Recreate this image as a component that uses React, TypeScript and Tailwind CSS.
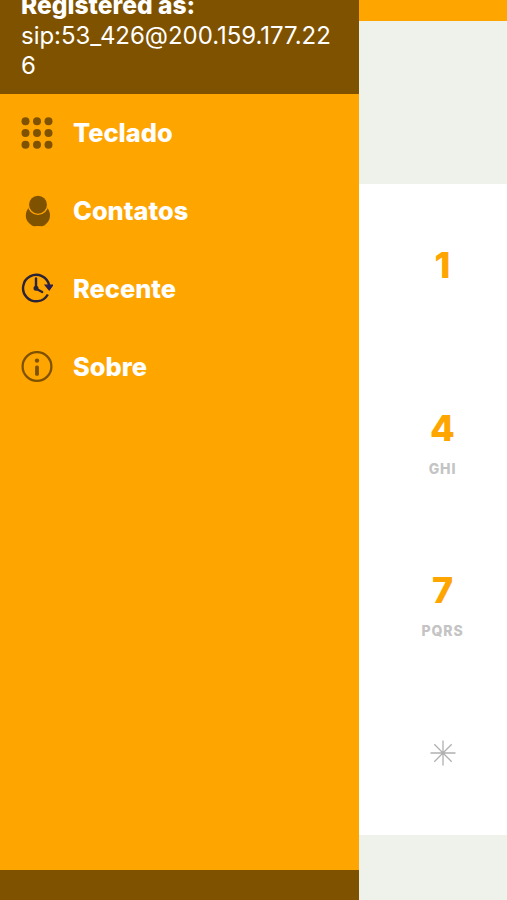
import { ReactNode } from "react"

const DialpadIcon = () => (
    <svg width="32" height="32" viewBox="0 0 32 32" fill="#7f5200">
        {[4.2, 16, 27.8].map((y) => [4.5, 16, 27.5].map((x) => (
            <circle key={`${x}-${y}`} cx={x} cy={y} r="4" />
        )))}
    </svg>
)

const ContactIcon = () => (
    <svg width="32" height="32" viewBox="0 0 32 32" fill="#7f5200">
        <path d="M9 11.5C3.6 16 3.4 24.5 8.5 28.6Q11 31.2 13 31.2q4-.5 8 0Q23.5 31.2 25.5 28.6C30.4 24.5 30.2 16 25 11.5z" />
        <circle cx="17" cy="9.7" r="9.6" stroke="#ffa500" strokeWidth="1.3" />
    </svg>
)

const RecentIcon = () => (
    <svg width="32" height="32" viewBox="0 0 32 32" fill="none" stroke="#2b2438" strokeWidth="2.4">
        <path d="M28.2 12.5A13.2 13.2 0 1 0 26.8 21.5" />
        <path d="M15 5.5v9.8" strokeLinecap="round" />
        <path d="M15.6 16l5.6 3" strokeLinecap="round" />
        <circle cx="15" cy="15.3" r="1.3" />
        <path d="M24.2 12.2h7.4L28.2 17z" fill="#2b1d50" stroke="#2b1d50" strokeWidth="1.2" />
    </svg>
)

const AboutIcon = () => (
    <svg width="32" height="32" viewBox="0 0 32 32" fill="#7f5200">
        <circle cx="16" cy="15.5" r="14.4" fill="none" stroke="#7f5200" strokeWidth="2.3" />
        <circle cx="16" cy="9.6" r="2.2" />
        <rect x="14.1" y="14.5" width="3.8" height="10.3" rx="1.6" />
    </svg>
)

const StarIcon = () => (
    <svg width="26" height="26" viewBox="0 0 26 26" stroke="#b0b0b0" strokeWidth="1.3">
        <path d="M13 0.5v25M0.5 13h25M4.3 4.3l17.4 17.4M21.7 4.3L4.3 21.7" />
    </svg>
)

const menu: { label: string, icon: ReactNode }[] = [
    { label: "Teclado", icon: <DialpadIcon /> },
    { label: "Contatos", icon: <ContactIcon /> },
    { label: "Recente", icon: <RecentIcon /> },
    { label: "Sobre", icon: <AboutIcon /> },
]

const keys: { digit: ReactNode, letters?: string }[] = [
    { digit: "1" },
    { digit: "4", letters: "GHI" },
    { digit: "7", letters: "PQRS" },
    { digit: <StarIcon /> },
]

const Drawer = () => (
    <aside className="w-[359px] shrink-0 flex flex-col bg-[#ffa500] text-white">
        <div className="h-[94px] shrink-0 overflow-hidden flex flex-col justify-end bg-[#7f5200] px-[21px] pb-[13px]">
            <div className="pb-px text-[24.6px] leading-[30px] font-extrabold">Registered as:</div>
            <div className="text-[24px] leading-[30px] tracking-[-0.03px] break-all">sip:53_426@200.159.177.226</div>
        </div>

        <nav className="flex-1">
            {menu.map((item) => (
                <button key={item.label} className="w-full h-[78px] flex items-center gap-5 px-[21px]">
                    {item.icon}
                    <span className="text-[25.4px] leading-[38px] font-extrabold">{item.label}</span>
                </button>
            ))}
        </nav>

        <div className="h-[30px] shrink-0 bg-[#7f5200]" />
    </aside>
)

const Keypad = () => (
    <main className="flex-1 flex flex-col bg-[#eef2eb]">
        <div className="h-[21px] bg-[#ffa500]" />
        <div className="h-[163px]" />
        <div className="h-[651px] grid grid-rows-4 bg-white pl-[19px]">
            {keys.map((key, i) => (
                <button key={i} className="grid grid-rows-[1fr_auto_1fr] justify-items-center">
                    <span className="row-start-2 pb-px text-[36px] leading-[38px] font-extrabold text-[#ffa500]">{key.digit}</span>
                    {key.letters && (
                        <span className="row-start-3 pt-[11px] text-[14px] leading-[20px] font-extrabold tracking-[0.9px] text-[#c4c4c4]">
                            {key.letters}
                        </span>
                    )}
                </button>
            ))}
        </div>
    </main>
)

export default function App() {
    return (
        <div className="h-screen flex overflow-hidden font-['Inter',sans-serif]">
            <Drawer />
            <Keypad />
        </div>
    )
}
